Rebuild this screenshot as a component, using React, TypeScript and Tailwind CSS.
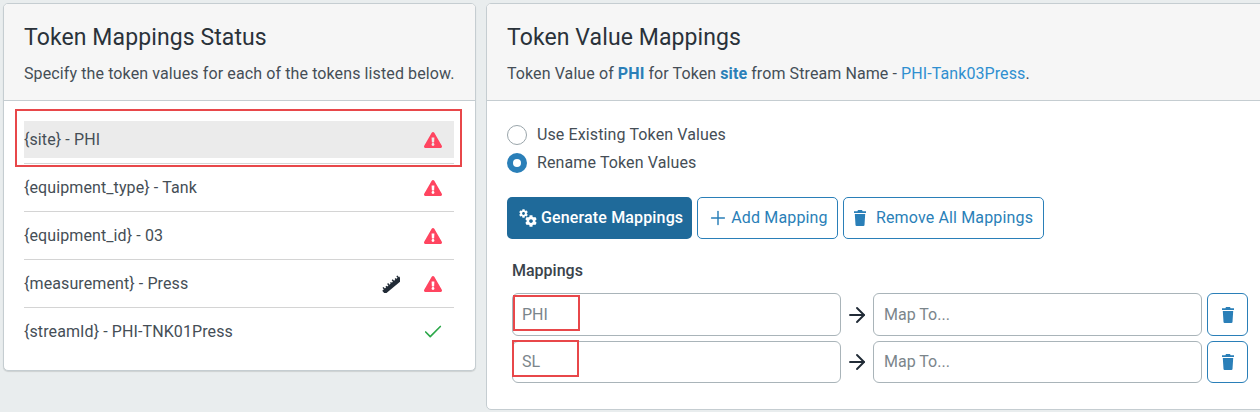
import { FaExclamationTriangle, FaCog } from "react-icons/fa";
import { Plus, ArrowRight, Check } from "lucide-react";

const rows = [
  { t: "{site} - PHI", active: true, warn: true },
  { t: "{equipment_type} - Tank", warn: true },
  { t: "{equipment_id} - 03", warn: true },
  { t: "{measurement} - Press", warn: true, ruler: true },
  { t: "{streamId} - PHI-TNK01Press", warn: false, last: true },
];

function Ruler() {
  return (
    <svg width="18" height="18" viewBox="0 0 18 18" className="mr-[24px]">
      <g transform="rotate(-40 9 9)" fill="#212b36">
        <rect x="-2" y="8.500" width="22" height="4.500" />
        <rect x="0" y="6.500" width="1.400" height="3" />
        <rect x="3" y="7.500" width="1.400" height="2" />
        <rect x="6" y="6.500" width="1.400" height="3" />
        <rect x="9" y="7.500" width="1.400" height="2" />
        <rect x="12" y="6.500" width="1.400" height="3" />
        <rect x="15" y="7.500" width="1.400" height="2" />
        <rect x="18" y="6.500" width="1.400" height="3" />
      </g>
    </svg>
  );
}

function Trash() {
  return (
    <svg width="12" height="16" viewBox="0 0 12 16" fill="currentColor">
      <path d="M4 0h4l.6 1.2H12v1.8H0V1.200h3.400z" />
      <path d="M.8 4h10.400l-.7 11a1.100 1.100 0 0 1-1.100 1H2.600a1.100 1.100 0 0 1-1.100-1z" />
    </svg>
  );
}

function Gears() {
  return (
    <span className="relative w-[18px] h-[18px] shrink-0">
      <FaCog size={9} className="absolute left-0 top-0" />
      <FaCog size={12} className="absolute right-0 bottom-0" />
    </span>
  );
}

function MapRow({ value, h }: { value: string; h: string }) {
  return (
    <div className={`flex items-stretch ${h}`}>
      <input
        readOnly
        placeholder={value}
        className="w-[329px] border border-[#a9b4b9] rounded-[6px] pl-[9px] text-[16px] outline-none placeholder:text-[#7b858b] bg-white"
      />
      <div className="w-[32px] flex items-center justify-center">
        <ArrowRight size={24} strokeWidth={1.9} color="#212b36" />
      </div>
      <input
        readOnly
        placeholder="Map To..."
        className="w-[329px] border border-[#a9b4b9] rounded-[6px] pl-[10px] text-[16px] outline-none placeholder:text-[#7b858b] bg-white"
      />
      <button className="ml-[5px] w-[41px] border border-[#2a7fb8] rounded-[6px] flex items-center justify-center text-[#2a7fb8] bg-white">
        <Trash />
      </button>
    </div>
  );
}

export default function App() {
  return (
    <div className="relative w-[1260px] h-[412px] overflow-hidden bg-[#e9edee] font-['Roboto',sans-serif] text-[#454e56]">
      <div className="flex items-start pl-[3px] pt-[3px] gap-[10px]">
        <section className="w-[473px] h-[368px] shrink-0 bg-white border border-[#c5cdd1] rounded-[5px] shadow-[0_1px_1px_rgba(0,0,0,0.12)] overflow-hidden">
          <header className="h-[97px] bg-[#f6f6f6] border-b border-[#c5cdd1] pl-[20px] pt-[19px]">
            <h2 className="text-[23px] leading-[30px] text-[#2a323a] tracking-[0.1px]">Token Mappings Status</h2>
            <p className="mt-[11px] text-[16px] leading-[20px] tracking-[0.11px] whitespace-nowrap">
              Specify the token values for each of the tokens listed below.
            </p>
          </header>
          <ul className="w-[430px] ml-[20px] mt-[15px]">
            {rows.map((r) => (
              <li key={r.t} className={`h-[48px] flex flex-col justify-center ${r.last ? "" : "border-b border-[#d4d4d4]"}`}>
                <div className={`h-[37px] flex items-center text-[16px] tracking-[0.1px] ${r.active ? "bg-[#ebebeb]" : ""}`}>
                  <span className="flex-1">{r.t}</span>
                  {r.ruler && <Ruler />}
                  {r.warn ? (
                    <FaExclamationTriangle size={18} color="#ff4560" className="mr-[12px]" />
                  ) : (
                    <Check size={22} strokeWidth={1.8} color="#2ca84a" className="mr-[10px]" />
                  )}
                </div>
              </li>
            ))}
          </ul>
        </section>

        <section className="w-[780px] h-[407px] shrink-0 bg-white border border-[#c5cdd1] rounded-[5px] overflow-hidden">
          <header className="h-[97px] bg-[#f6f6f6] border-b border-[#c5cdd1] pl-[20px] pt-[19px]">
            <h2 className="text-[23px] leading-[30px] text-[#2a323a] tracking-[0.1px]">Token Value Mappings</h2>
            <p className="mt-[11px] text-[16px] leading-[20px] tracking-[0.09px] whitespace-nowrap">
              Token Value of <b className="font-bold text-[#2a7fb8]">PHI</b> for Token{" "}
              <b className="font-bold text-[#2a7fb8]">site</b> from Stream Name -{" "}
              <span className="text-[#2f8fd0]">PHI-Tank03Press</span>.
            </p>
          </header>
          <div className="pl-[20px] pt-[20px]">
            <label className="flex items-center h-[28px] text-[16px] tracking-[0.12px]">
              <span className="w-[20px] h-[20px] rounded-full border border-[#9aa5aa] bg-white mr-[10px]" />
              Use Existing Token Values
            </label>
            <label className="flex items-center h-[28px] text-[16px] tracking-[0.12px]">
              <span className="w-[20px] h-[20px] rounded-full bg-[#2a7fb8] mr-[10px] flex items-center justify-center">
                <span className="w-[8px] h-[8px] rounded-full bg-white" />
              </span>
              Rename Token Values
            </label>
            <div className="flex mt-[20px] h-[42px] gap-[5px] text-[16px] tracking-[0.15px]">
              <button className="w-[185px] bg-[#1f6a9a] text-white font-medium rounded-[5px] flex items-center pl-[12px] gap-[4px]">
                <Gears />
                Generate Mappings
              </button>
              <button className="w-[141px] border border-[#2a7fb8] text-[#2a7fb8] rounded-[5px] bg-white flex items-center justify-center gap-[2px]">
                <Plus size={22} strokeWidth={1.6} />
                Add Mapping
              </button>
              <button className="w-[201px] border border-[#2a7fb8] text-[#2a7fb8] rounded-[5px] bg-white flex items-center justify-center gap-[10px]">
                <Trash />
                Remove All Mappings
              </button>
            </div>
            <div className="ml-[5px] mt-[22px] text-[16px] leading-[20px] font-medium text-[#3a434b]">Mappings</div>
            <div className="ml-[5px] mt-[12px] flex flex-col gap-[5px]">
              <MapRow value="PHI" h="h-[43px]" />
              <MapRow value="SL" h="h-[42px]" />
            </div>
          </div>
        </section>
      </div>

      <div className="absolute left-[15px] top-[109px] w-[447px] h-[58px] border-2 border-[#e8474a]" />
      <div className="absolute left-[513px] top-[295px] w-[67px] h-[36px] border-2 border-[#e8474a]" />
      <div className="absolute left-[512px] top-[340px] w-[67px] h-[37px] border-2 border-[#e8474a]" />
    </div>
  );
}
